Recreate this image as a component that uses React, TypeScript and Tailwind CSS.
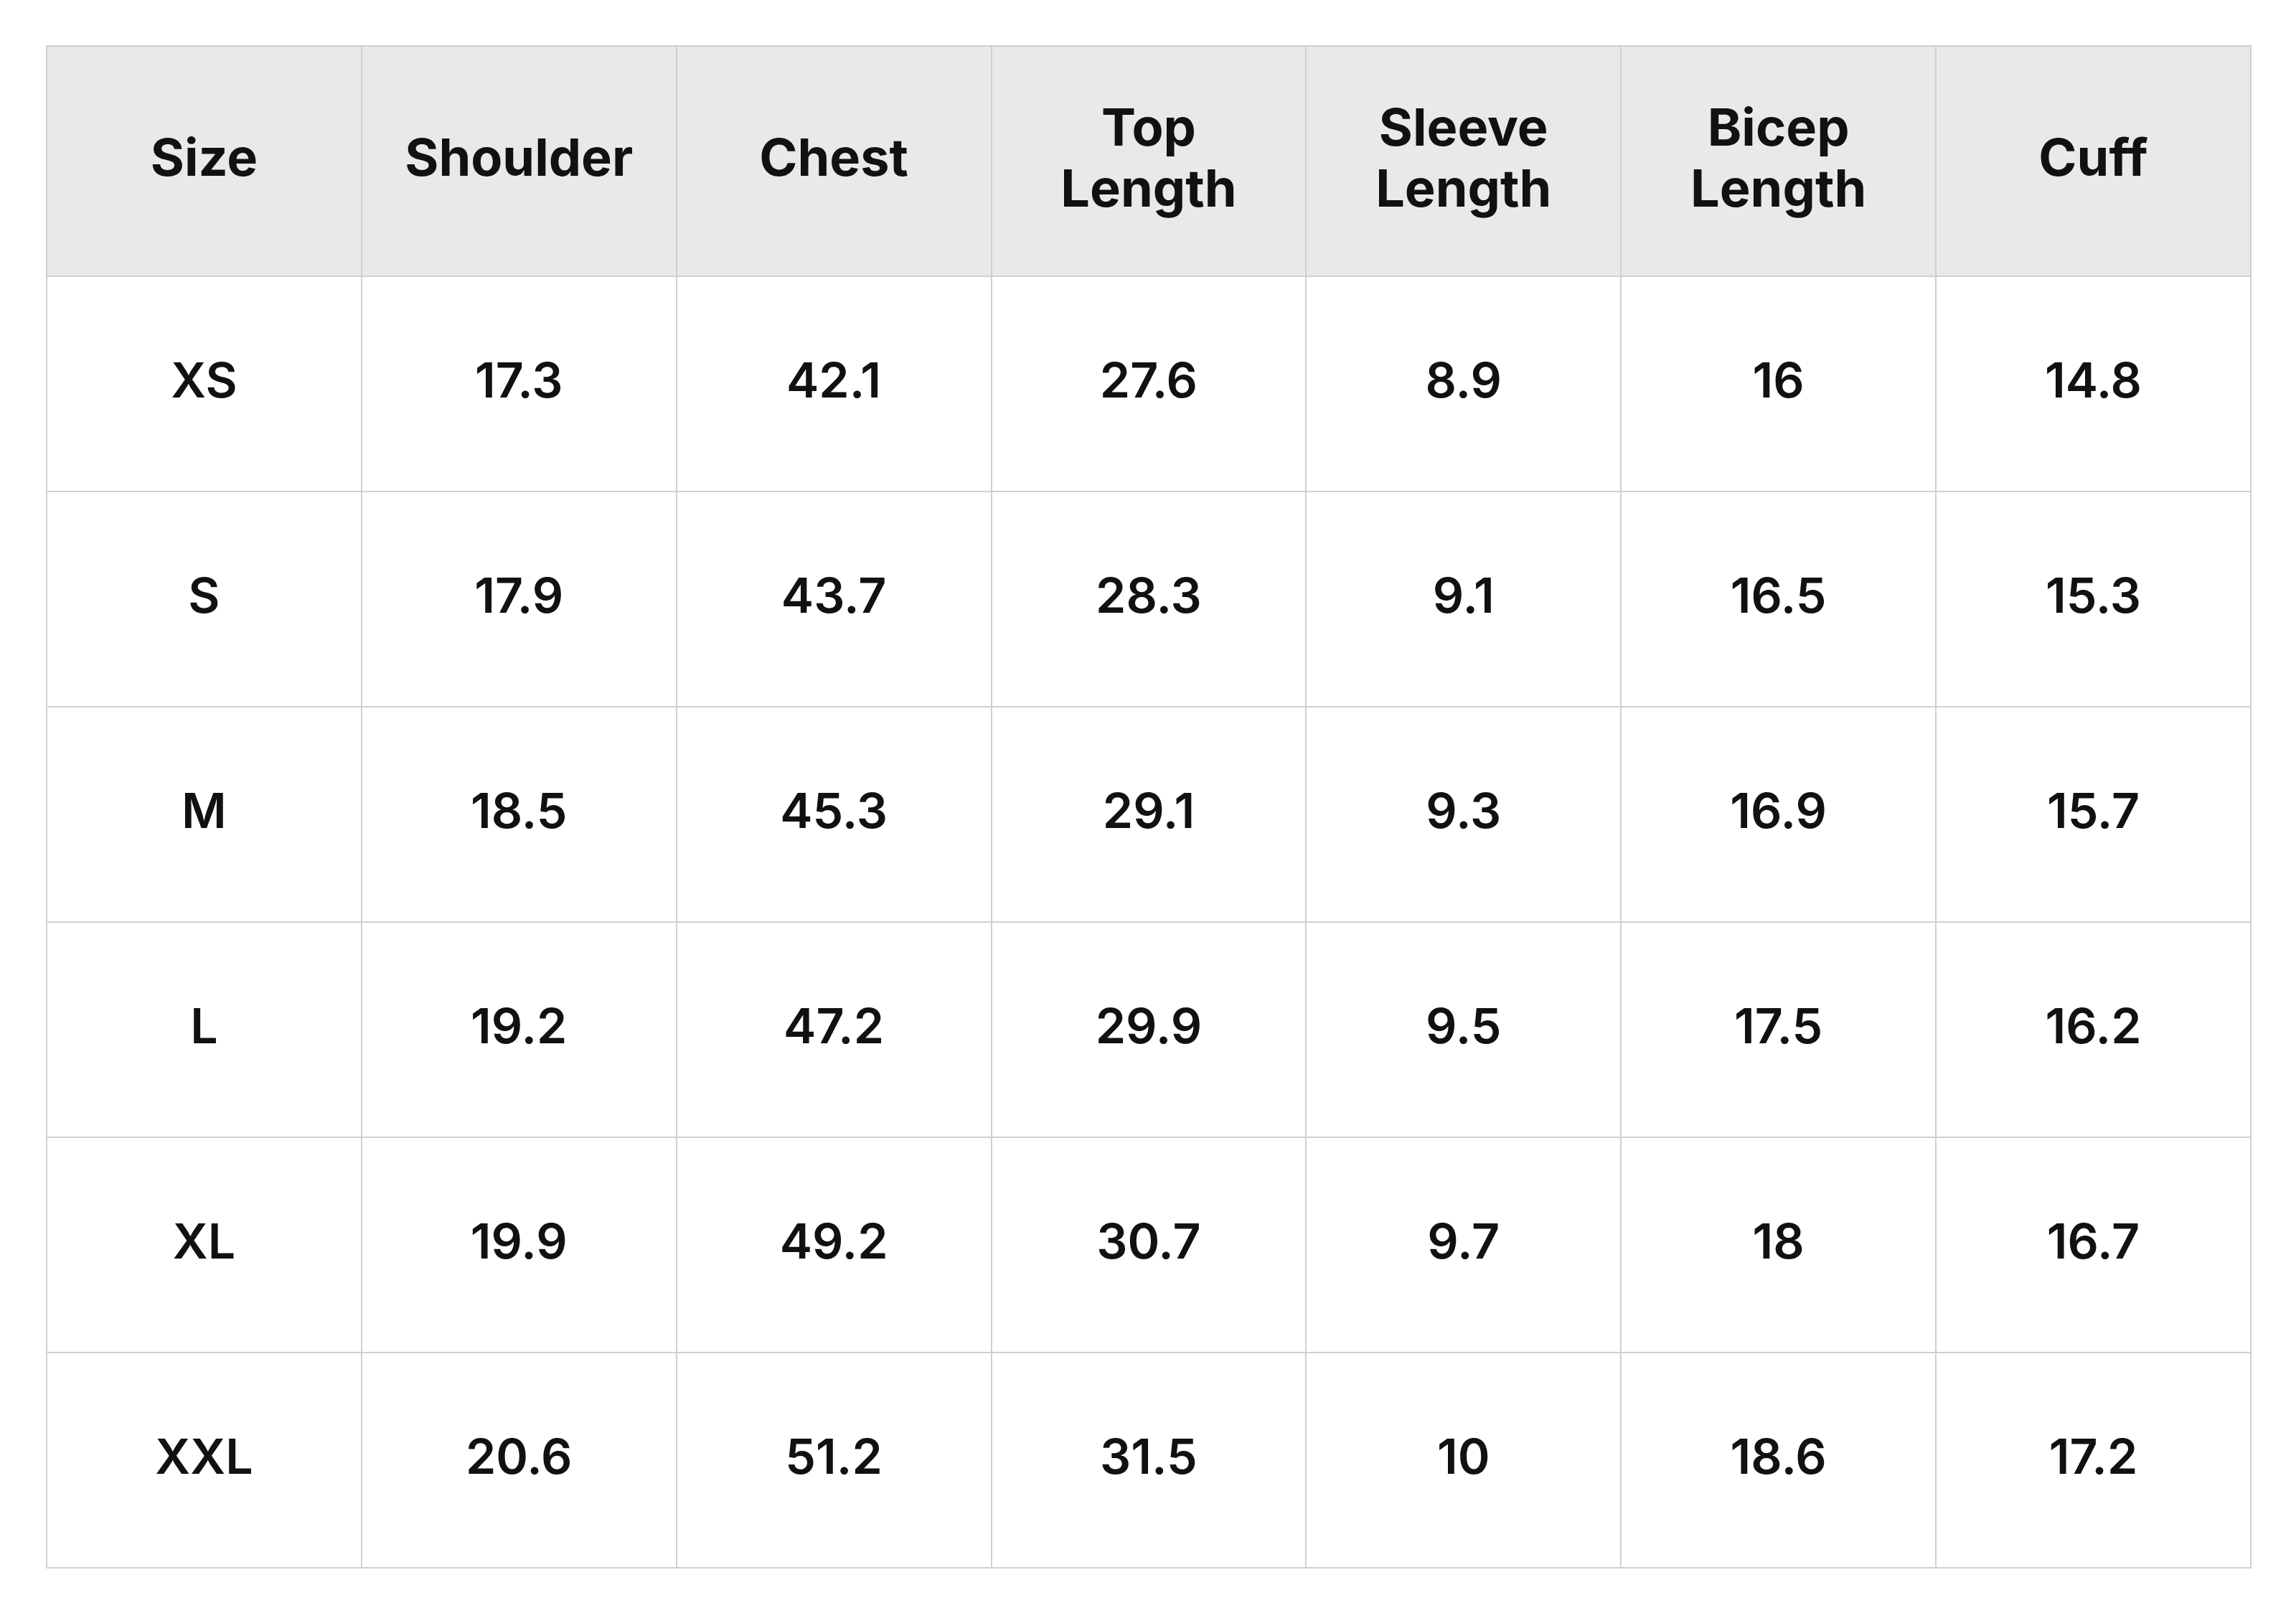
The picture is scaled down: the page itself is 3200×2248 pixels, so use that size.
const headers = ["Size", "Shoulder", "Chest", "Top Length", "Sleeve Length", "Bicep Length", "Cuff"]

const rows = [
  ["XS", "17.3", "42.1", "27.6", "8.9", "16", "14.8"],
  ["S", "17.9", "43.7", "28.3", "9.1", "16.5", "15.3"],
  ["M", "18.5", "45.3", "29.1", "9.3", "16.9", "15.7"],
  ["L", "19.2", "47.2", "29.9", "9.5", "17.5", "16.2"],
  ["XL", "19.9", "49.2", "30.7", "9.7", "18", "16.7"],
  ["XXL", "20.6", "51.2", "31.5", "10", "18.6", "17.2"],
]

export default function App() {
  return (
    <div className="min-h-screen bg-white pl-[64px] pt-[63px] font-['Inter','Noto_Sans',sans-serif] text-[#111111]">
      <table className="w-[3074px] table-fixed border-collapse border-2 border-[#d0d0d0]">
        <thead>
          <tr className="bg-[#e9e9e9]">
            {headers.map((h) => (
              <th
                key={h}
                className="h-[321px] border-2 border-[#d0d0d0] px-10 pb-[12px] text-center align-middle text-[72px] font-bold leading-[85px]"
              >
                {h.split(" ").map((w) => (
                  <div key={w}>{w}</div>
                ))}
              </th>
            ))}
          </tr>
        </thead>
        <tbody>
          {rows.map((r) => (
            <tr key={r[0]}>
              {r.map((v, i) => (
                <td
                  key={i}
                  className="h-[300px] border-2 border-[#d0d0d0] pb-[12px] text-center align-middle text-[68px] font-semibold"
                >
                  {v}
                </td>
              ))}
            </tr>
          ))}
        </tbody>
      </table>
    </div>
  )
}
